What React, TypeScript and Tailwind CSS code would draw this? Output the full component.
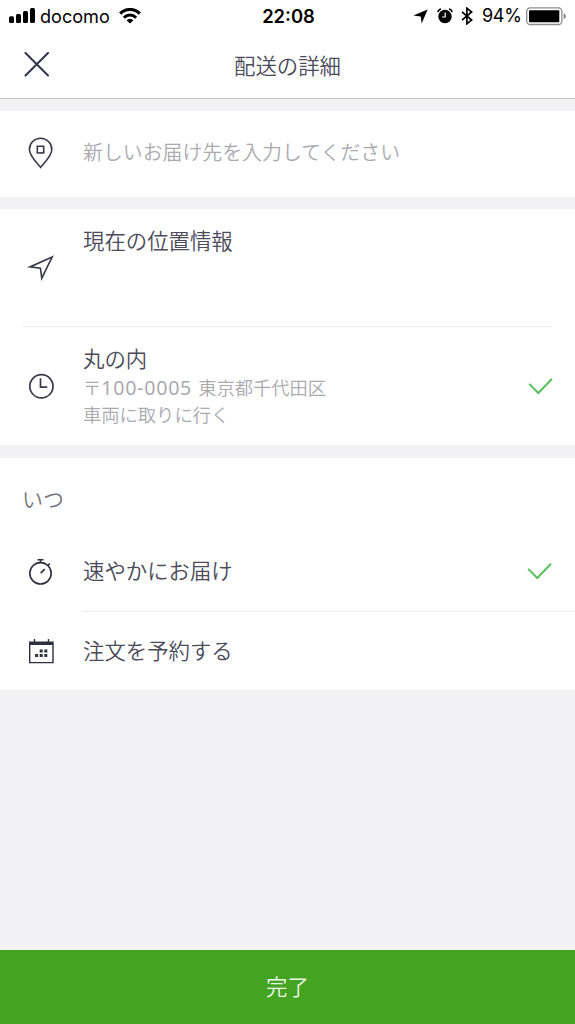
import type { ReactNode } from "react"

function SignalIcon() {
  return (
    <svg width="26" height="16" viewBox="0 0 26 16" fill="#000">
      <rect x="0" y="8.2" width="5" height="6.8" rx="1.5" />
      <rect x="7" y="6" width="5" height="9" rx="1.5" />
      <rect x="14" y="3" width="5" height="12" rx="1.5" />
      <rect x="21" y="0" width="5" height="15" rx="1.5" />
    </svg>
  )
}

function WifiIcon() {
  return (
    <svg width="22" height="16" viewBox="0 0 22 16" fill="none" stroke="#000" strokeWidth="3">
      <path d="M1.2 5.6C6.5 0 15.5 0 20.8 5.6" />
      <path d="M4.9 9.7C8.3 6.2 13.7 6.2 17.1 9.7" />
      <path d="M11 15.4 7.7 12.4C9.4 10.6 12.6 10.6 14.3 12.4Z" fill="#000" stroke="none" />
    </svg>
  )
}

function AlarmIcon() {
  return (
    <svg width="16" height="16" viewBox="0 0 16 16" fill="none">
      <circle cx="8" cy="8.5" r="6.7" fill="#000" />
      <path d="M.9 4.2A4 4 0 0 1 4 1M15.1 4.2A4 4 0 0 0 12 1" stroke="#000" strokeWidth="1.6" />
      <path d="M8.2 4.5V9H5.1" stroke="#fff" strokeWidth="1.2" />
    </svg>
  )
}

function BatteryIcon() {
  return (
    <svg width="41" height="19" viewBox="0 0 41 19">
      <rect x="0.7" y="0.9" width="35.2" height="16.6" rx="3.5" fill="none" stroke="#8d8d8d" strokeWidth="1.3" />
      <rect x="3" y="3.2" width="30.3" height="12" rx="1" fill="#000" />
      <path d="M37.6 6.3Q40 7 40 9.2T37.6 12.1Z" fill="#8d8d8d" />
    </svg>
  )
}

function PinIcon() {
  return (
    <svg className="-mt-px" width="28" height="32" viewBox="0 0 28 32" fill="none" stroke="#3a3a4a" strokeWidth="1.6">
      <path d="M13.6 30.4C10.4 26 2.4 19.1 2.4 12.4a11.2 11.2 0 0 1 22.4 0C24.8 19.1 16.8 26 13.6 30.4Z" />
      <rect x="10.3" y="9.3" width="6.4" height="6.6" />
    </svg>
  )
}

function NavigateIcon() {
  return (
    <svg width="28" height="28" viewBox="0 0 28 28" fill="none" stroke="#3a3a4a" strokeWidth="1.6">
      <path d="M25.2 3.9 3 13.9 13.4 15.1 14.8 25.2Z" />
    </svg>
  )
}

function ClockIcon() {
  return (
    <svg width="28" height="28" viewBox="0 0 28 28" fill="none" stroke="#3a3a4a" strokeWidth="1.7">
      <circle cx="14.4" cy="14.3" r="11.6" />
      <path d="M13.5 6.2V15.1H20.2" />
    </svg>
  )
}

function StopwatchIcon() {
  return (
    <svg width="28" height="28" viewBox="0 0 28 28" fill="none" stroke="#2f2f3e" strokeWidth="1.6">
      <circle cx="13.5" cy="16.3" r="10.7" />
      <path d="M10.5 2.7H16.5M13.5 2.7V5.5M20.5 8.9 22.9 6.5M13.7 16.1 17.7 12.1" />
    </svg>
  )
}

function CalendarIcon() {
  return (
    <svg width="28" height="28" viewBox="0 0 28 28" fill="#2f2f3e">
      <path d="M2 4.6H26.7V26.3H2ZM3.4 8V24.9H25.3V8Z" fillRule="evenodd" />
      <path d="M6.8 2H8.2V5H6.8ZM20.8 2H22.2V5H20.8Z" />
      <path d="M12.7 12.5h3v3h-3zM17.3 12.5h3v3h-3zM8.1 17h3v3h-3zM12.7 17h3v3h-3zM17.3 17h3v3h-3z" />
    </svg>
  )
}

function CheckIcon({ className }: { className?: string }) {
  return (
    <svg className={className} width="25" height="18" viewBox="0 0 25 18" fill="none" stroke="#5abf5f" strokeWidth="2">
      <path d="M1.2 6.9 10.3 16 24 1.7" />
    </svg>
  )
}

function IconCell({ children }: { children: ReactNode }) {
  return <div className="flex w-[83px] shrink-0 items-center self-stretch pl-[27px]">{children}</div>
}

export default function App() {
  return (
    <div className="flex h-[1024px] w-[575px] flex-col overflow-hidden bg-[#f2f2f4] font-['Noto_Sans_CJK_JP',sans-serif] text-[21.4px] font-[350] text-[#4b4b5a]">
      <header className="h-[99px] shrink-0 border-b border-[#c4c4c6] bg-white">
        <div className="grid h-8 grid-cols-[1fr_auto_1fr] items-center font-['Inter',sans-serif] text-[19px] leading-8 font-normal text-black">
          <div className="flex items-center pl-[9px]">
            <SignalIcon />
            <span className="ml-[5px] w-[70px] text-[18.1px]">docomo</span>
            <span className="ml-[9px]">
              <WifiIcon />
            </span>
          </div>
          <span className="pl-[2px] text-[18.4px] font-semibold">22:08</span>
          <div className="flex items-center justify-end pr-2">
            <svg width="15" height="15" viewBox="0 0 15 15">
              <path d="M14.6.4 8.7 14.6 7.7 7.5.4 6.4Z" />
            </svg>
            <span className="ml-[9px]">
              <AlarmIcon />
            </span>
            <svg className="ml-[8px]" width="12" height="18" viewBox="0 0 12 18" fill="none" stroke="#000" strokeWidth="1.7">
              <path d="M1 4.8 10.6 13 5.9 16.8V1.2L10.6 5 1 13.2" />
            </svg>
            <span className="ml-[9px] w-[44px] text-[18px] tracking-[-0.3px]">94%</span>
            <BatteryIcon />
          </div>
        </div>
        <div className="grid h-[66px] grid-cols-[1fr_auto_1fr] items-center">
          <button className="ml-6 w-fit">
            <svg width="26" height="26" viewBox="0 0 26 26" fill="none" stroke="#33334a" strokeWidth="2">
              <path d="M1.5 1 24 23.5M24 1 1.5 23.5" strokeLinecap="round" />
            </svg>
          </button>
          <h1>配送の詳細</h1>
        </div>
      </header>

      <section className="mt-[11.5px] flex h-[86px] shrink-0 items-center bg-white">
        <IconCell>
          <PinIcon />
        </IconCell>
        <span className="pb-[3px] text-[19.9px] text-[#aaaaaf]">新しいお届け先を入力してください</span>
      </section>

      <section className="mt-3 h-[236.5px] shrink-0 bg-white">
        <div className="flex h-[117px] items-start">
          <IconCell>
            <NavigateIcon />
          </IconCell>
          <span className="pt-[15px] leading-8">現在の位置情報</span>
        </div>
        <div className="mr-[23px] ml-[23px] h-px bg-[#ebebed]" />
        <div className="flex h-[119px] items-center">
          <IconCell>
            <ClockIcon />
          </IconCell>
          <div className="flex-1 text-[18.3px] leading-[27px] text-[#aaaaaf]">
            <p className="-mt-[2px] pb-px text-[21.4px] leading-[30px] text-[#4b4b5a]">丸の内</p>
            <p>
              〒
              <span className="mr-[2px] font-['Noto_Sans',sans-serif] text-[19.6px] font-normal tracking-[0.75px]">
                100-0005
              </span>{" "}
              東京都千代田区
            </p>
            <p>車両に取りに行く</p>
          </div>
          <CheckIcon className="mr-[22px]" />
        </div>
      </section>

      <section className="mt-[12.5px] h-[232.5px] shrink-0 bg-white">
        <h2 className="h-[73px] pt-[24px] pl-[22px] text-[21px] leading-8 text-[#73737e]">いつ</h2>
        <div className="flex h-[80px] items-center">
          <IconCell>
            <StopwatchIcon />
          </IconCell>
          <span className="flex-1">速やかにお届け</span>
          <CheckIcon className="mr-[23px]" />
        </div>
        <div className="ml-[83px] h-px bg-[#ebebed]" />
        <div className="flex h-[79px] items-center">
          <IconCell>
            <CalendarIcon />
          </IconCell>
          <span className="pb-[2px]">注文を予約する</span>
        </div>
      </section>

      <button className="mt-auto h-[74px] shrink-0 bg-[#43a422] pb-[2px] text-[#eef8ea]">完了</button>
    </div>
  )
}
